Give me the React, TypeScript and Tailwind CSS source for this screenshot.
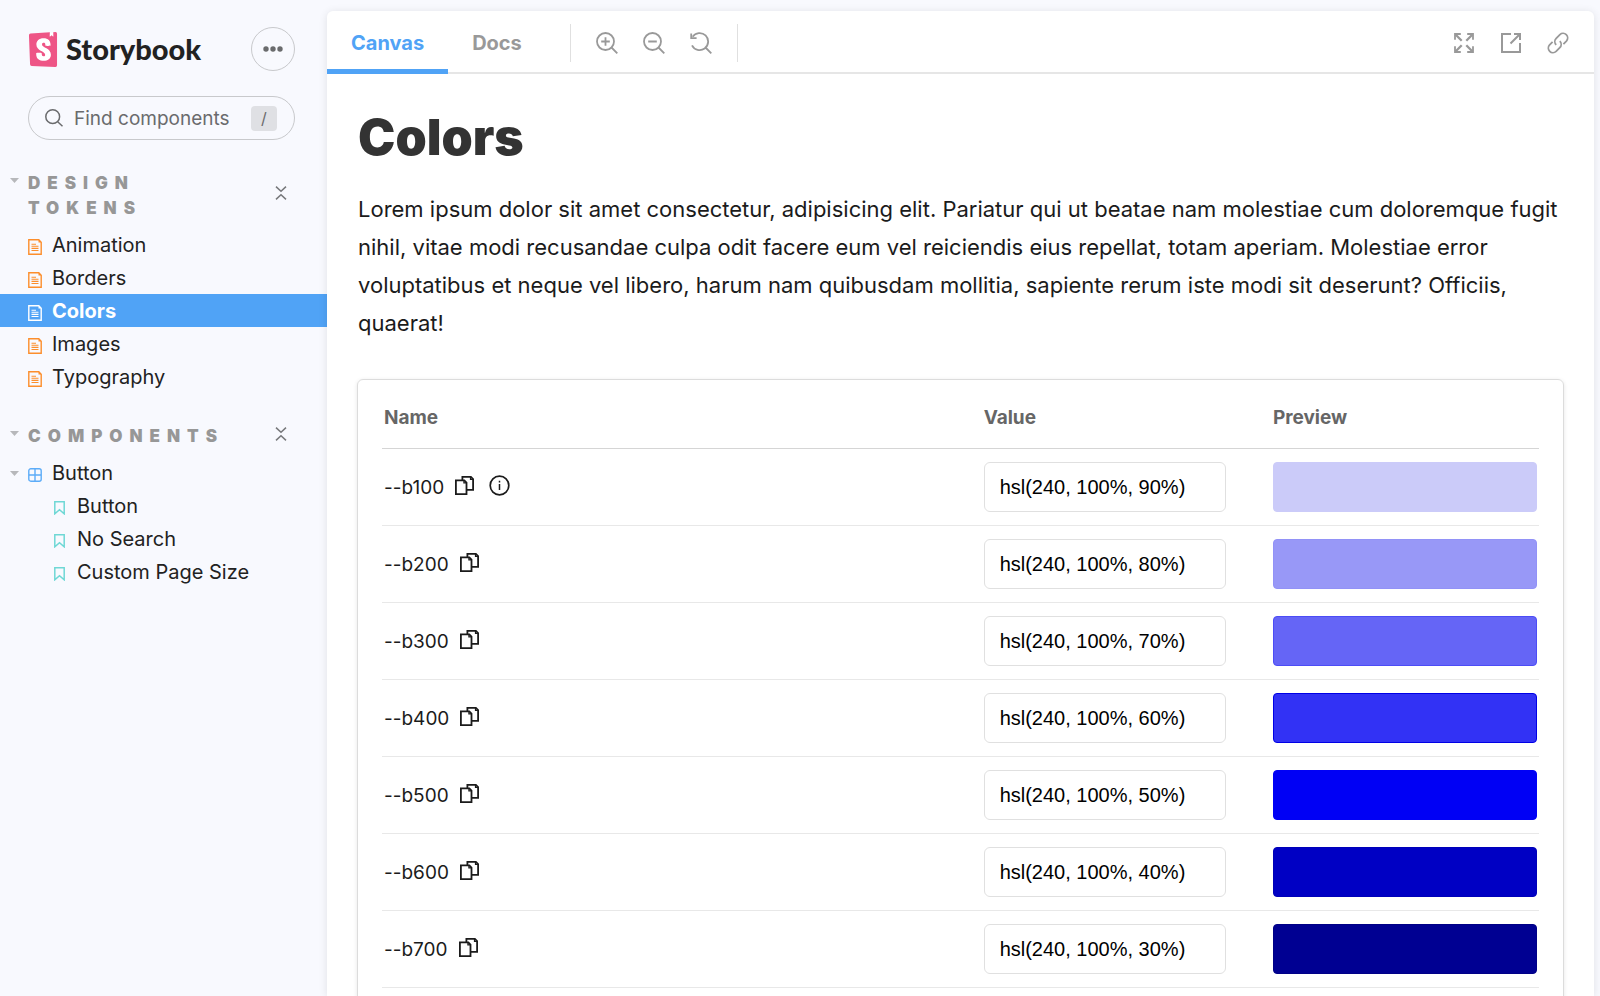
import type { ReactNode } from "react";
import { SiStorybook } from "react-icons/si";

const tokens = [
  { name: "--b100", value: "hsl(240, 100%, 90%)", swatch: "border-[#cbcbf9] bg-[#cbcbf9]", info: true },
  { name: "--b200", value: "hsl(240, 100%, 80%)", swatch: "border-[#9292f7] bg-[#9898f7]" },
  { name: "--b300", value: "hsl(240, 100%, 70%)", swatch: "border-[#4c4cf6] bg-[#6565f6]" },
  { name: "--b400", value: "hsl(240, 100%, 60%)", swatch: "border-[#0000e6] bg-[#3232f5]" },
  { name: "--b500", value: "hsl(240, 100%, 50%)", swatch: "border-[#0000f5] bg-[#0000f5]" },
  { name: "--b600", value: "hsl(240, 100%, 40%)", swatch: "border-[#0000b8] bg-[#0000c4]" },
  { name: "--b700", value: "hsl(240, 100%, 30%)", swatch: "border-[#000086] bg-[#000092]" },
];

const documents = ["Animation", "Borders", "Colors", "Images", "Typography"];
const stories = ["Button", "No Search", "Custom Page Size"];

function Caret() {
  return (
    <svg className="h-[5px] w-[9px] shrink-0" viewBox="0 0 9 5" aria-hidden="true">
      <path d="M0 0h9L4.5 5z" fill="#b7b8bb" />
    </svg>
  );
}

function DocumentIcon({ active }: { active: boolean }) {
  return (
    <svg
      className={active ? "h-4 w-3.5 text-white" : "h-4 w-3.5 text-[#fc8e2c]"}
      viewBox="0 0 14 16"
      fill="none"
      stroke="currentColor"
      strokeWidth="1.4"
      aria-hidden="true"
    >
      <path d="M.8.8h10l2.4 2.4v12H.8z" />
      <path d="M3.5 5.2h4.500M3.5 7.3h7M3.5 9.400h7M3.5 11.5h7" strokeWidth="1.1" />
      <path d="M10.500.8v2.800h2.700z" fill="currentColor" stroke="none" />
    </svg>
  );
}

function ComponentIcon() {
  return (
    <svg className="h-3.5 w-3.5" viewBox="0 0 14 14" fill="none" stroke="#5cacf8" strokeWidth="1.4" aria-hidden="true">
      <rect x=".8" y=".8" width="12.4" height="12.4" rx="2" />
      <path d="M7 1v12M1 7h12" />
    </svg>
  );
}

function BookmarkIcon() {
  return (
    <svg className="h-3.5 w-[11px]" viewBox="0 0 11 14" fill="none" stroke="#6fd8d5" strokeWidth="1.5" aria-hidden="true">
      <path d="M.8.8h9.4v12L5.5 8.7.8 12.8z" />
    </svg>
  );
}

function CollapseIcon() {
  return (
    <svg className="h-3.5 w-3" viewBox="0 0 12 14" fill="none" stroke="#77787b" strokeWidth="1.5" aria-hidden="true">
      <path d="M1 .6l5 4.700 5-4.700M1 13.400l5-4.700 5 4.700" />
    </svg>
  );
}

function ToolButton({ label, children }: { label: string; children: ReactNode }) {
  return (
    <button type="button" aria-label={label} className="text-[#999999]">
      <svg className="h-[22px] w-[22px]" viewBox="0 0 22 22" fill="none" stroke="currentColor" strokeWidth="1.8" aria-hidden="true">
        {children}
      </svg>
    </button>
  );
}

function CopyIcon() {
  return (
    <svg className="h-[19px] w-[19px]" viewBox="0 0 19 19" fill="none" stroke="#1b1b1b" strokeWidth="1.8" aria-hidden="true">
      <path d="M.9 4.300h8.400l2.200 2.200v11.600H.9z" />
      <path d="M8.900 4.500v2.400h2.500" strokeWidth="1.200" />
      <path d="M7.400 4.300V.9h8.500l2.200 2.200v10.700h-6.400" />
      <path d="M15.500 1.100v2.400H18" strokeWidth="1.200" />
    </svg>
  );
}

function SectionHeading({ title, lines }: { title: string; lines: string[] }) {
  return (
    <div className="flex items-start pl-2.5 pr-10">
      <div className="flex h-[19px] w-[18px] items-center">
        <Caret />
      </div>
      <button
        type="button"
        className="text-left text-[17px] leading-[25px] font-black tracking-[7px] text-[#979797] uppercase"
      >
        {lines.map((line) => (
          <span key={line} className="block">
            {line}
          </span>
        ))}
      </button>
      <button type="button" aria-label={`Collapse ${title}`} className="ml-auto self-center pb-1.5">
        <CollapseIcon />
      </button>
    </div>
  );
}

function Sidebar() {
  return (
    <aside className="w-[327px] shrink-0">
      <div className="flex items-center justify-between pt-[27px] pr-8 pl-7">
        <a href="#home" className="flex items-center gap-2">
          <svg className="h-[35px] w-[30px]" viewBox="2 0 20 24" aria-hidden="true">
            <path d="M6 4h12v16H6z" fill="#fff" />
            <path d="M16.500.5h2.500v4h-2.500z" fill="#fff" />
            <SiStorybook size={24} color="#ee5586" />
          </svg>
          <span className="font-['Lato',sans-serif] text-[29px] leading-9 font-black text-[#222222]">Storybook</span>
        </a>
        <button
          type="button"
          aria-label="Shortcuts"
          className="flex h-11 w-11 items-center justify-center rounded-full border border-[#c8c9cc]"
        >
          <svg className="h-1.5 w-5" viewBox="0 0 20 6" fill="#6a6b6d" aria-hidden="true">
            <circle cx="3" cy="3" r="2.7" />
            <circle cx="10" cy="3" r="2.7" />
            <circle cx="17" cy="3" r="2.7" />
          </svg>
        </button>
      </div>

      <label className="mt-[25px] mr-8 ml-7 flex h-11 items-center rounded-full border border-[#c8c9cc] pr-[17px] pl-4">
        <svg className="h-[18px] w-[18px] shrink-0" viewBox="0 0 18 18" fill="none" stroke="#6a6b6d" strokeWidth="1.5" aria-hidden="true">
          <circle cx="7.7" cy="7.7" r="6.9" />
          <path d="M12.7 12.7l4.8 4.600" />
        </svg>
        <input
          type="text"
          aria-label="Find components"
          placeholder="Find components"
          className="ml-[11px] min-w-0 flex-1 bg-transparent pt-0.5 text-[19px] leading-6 text-[#6a6b6d] outline-none placeholder:text-[#6a6b6d]"
        />
        <kbd className="flex h-[25px] w-[26px] items-center justify-center rounded bg-[#dfe0e4] font-['Inter',sans-serif] text-base text-[#6a6b6d]">
          /
        </kbd>
      </label>

      <nav className="pt-[31px] text-[20px] leading-[33px] text-[#222222]">
        <SectionHeading title="Design Tokens" lines={["Design", "Tokens"]} />
        <ul className="mt-[7px]">
          {documents.map((name) => {
            const active = name === "Colors";
            return (
              <li key={name}>
                <a
                  href={`#${name.toLowerCase()}`}
                  className={
                    active
                      ? "flex h-[33px] items-center gap-2.5 bg-[#50a3f6] pt-0.5 pl-7 font-bold text-white"
                      : "flex h-[33px] items-center gap-2.5 pt-0.5 pl-7"
                  }
                >
                  <span className="pt-0.5">
                    <DocumentIcon active={active} />
                  </span>
                  {name}
                </a>
              </li>
            );
          })}
        </ul>
        <div className="mt-[31px]">
          <SectionHeading title="Components" lines={["Components"]} />
        </div>
        <div className="mt-[7px]">
          <a href="#button" className="flex h-[33px] items-center pt-0.5 pl-2.5">
            <span className="w-[18px]">
              <Caret />
            </span>
            <span className="mr-2.5 pt-0.5">
              <ComponentIcon />
            </span>
            Button
          </a>
          <ul>
            {stories.map((name) => (
              <li key={name}>
                <a
                  href={`#${name.toLowerCase().replace(/ /g, "-")}`}
                  className="flex h-[33px] items-center gap-3 pt-0.5 pl-[54px]"
                >
                  <span className="pt-0.5">
                    <BookmarkIcon />
                  </span>
                  {name}
                </a>
              </li>
            ))}
          </ul>
        </div>
      </nav>
    </aside>
  );
}

function Toolbar() {
  return (
    <header className="flex h-[63px] shrink-0 border-b-2 border-[#e6e6e6] text-[20px] font-bold">
      <button type="button" className="-mb-0.5 border-b-[5px] border-[#50a3f6] px-6 pt-1.5 text-[#50a3f6]">
        Canvas
      </button>
      <button type="button" className="px-6 pt-[3px] text-[#999999]">
        Docs
      </button>
      <div className="ml-6 flex items-center pt-0.5">
        <div className="h-[38px] w-px bg-[#e0e0e0]" />
        <div className="flex gap-[25px] px-[25px]">
          <ToolButton label="Zoom in">
            <circle cx="9.5" cy="9.5" r="8.5" />
            <path d="M15.5 15.5l5.800 5.800M9.5 5.2v8.600M5.2 9.5h8.600" />
          </ToolButton>
          <ToolButton label="Zoom out">
            <circle cx="9.5" cy="9.5" r="8.5" />
            <path d="M15.5 15.5l5.800 5.800M5.2 9.5h8.600" />
          </ToolButton>
          <ToolButton label="Reset zoom">
            <path d="M2.600 4.800A8.5 8.5 0 1 1 2 13.300M15.5 15.5l5.800 5.800" />
            <path d="M1.200 1.500v4.600h5.400" />
          </ToolButton>
        </div>
        <div className="h-[38px] w-px bg-[#e0e0e0]" />
      </div>
      <div className="ml-auto flex items-center gap-[25px] pt-0.5 pr-[25px]">
        <ToolButton label="Go full screen">
          <path d="M2 7.800V2h5.800M14.200 2H20v5.800M20 14.200V20h-5.800M7.800 20H2v-5.800" />
          <path d="M2.500 2.500l6.200 6.200M19.500 2.500l-6.200 6.200M19.500 19.500l-6.200-6.200M2.500 19.500l6.200-6.200" strokeWidth="2.300" />
        </ToolButton>
        <ToolButton label="Open canvas in new tab">
          <path d="M11 2H2v18h18v-9M14 2h6v6M20 2l-9.500 9.500" strokeWidth="2" />
        </ToolButton>
        <ToolButton label="Copy canvas link">
          <path d="M9.200 12.800a4.600 4.600 0 0 1 0-6.500l3.700-3.700a4.600 4.600 0 0 1 6.500 6.500l-3 3" />
          <path d="M12.800 9.200a4.600 4.600 0 0 1 0 6.500l-3.700 3.700a4.600 4.600 0 0 1-6.500-6.500l3-3" />
        </ToolButton>
      </div>
    </header>
  );
}

function TokenTable() {
  return (
    <div className="-mx-px mt-9 rounded-md border border-[#dcdcdc] px-6 pt-2 pb-6 shadow-[0_1px_4px_rgba(0,0,0,0.1)]">
      <table className="w-full table-fixed border-collapse">
        <thead>
          <tr className="h-[60px] border-b border-[#d5d5d5] text-left text-[19px] text-[#666666]">
            <th className="w-[52%] pl-0.5 font-bold">Name</th>
            <th className="w-[25%] font-bold">Value</th>
            <th className="w-[23%] font-bold">Preview</th>
          </tr>
        </thead>
        <tbody>
          {tokens.map((token) => (
            <tr key={token.name} className="h-[77px] border-b border-[#e8e8e8]">
              <td className="pl-0.5">
                <div className="flex items-center text-[19px] text-[#1b1b1b]">
                  <span className="pt-[3px]">{token.name}</span>
                  <button type="button" aria-label={`Copy ${token.name}`} className="ml-[11px] pb-0.5">
                    <CopyIcon />
                  </button>
                  {token.info && (
                    <button type="button" aria-label={`About ${token.name}`} className="ml-[15px] pb-0.5">
                      <svg className="h-[21px] w-[21px]" viewBox="0 0 21 21" fill="none" stroke="#1b1b1b" strokeWidth="1.7" aria-hidden="true">
                        <circle cx="10.5" cy="10.5" r="9.3" />
                        <path d="M10.5 9v6M10.5 5.8v1.7" strokeWidth="1.5" />
                      </svg>
                    </button>
                  )}
                </div>
              </td>
              <td>
                <input
                  type="text"
                  aria-label={`Value of ${token.name}`}
                  defaultValue={token.value}
                  className="block h-[50px] w-[242px] rounded-md border border-[#e0e0e0] bg-white px-[15px] pt-0.5 font-['Liberation_Sans',sans-serif] text-[20px] text-black"
                />
              </td>
              <td className="pr-0.5">
                <div className={`${token.swatch} h-[50px] rounded border`} />
              </td>
            </tr>
          ))}
        </tbody>
      </table>
    </div>
  );
}

export default function App() {
  return (
    <div className="flex h-screen overflow-hidden bg-[#f8f9fe] font-['Inter',sans-serif]">
      <Sidebar />
      <div className="flex min-w-0 flex-1 pt-[11px] pr-1.5">
        <div className="flex min-w-0 flex-1 flex-col rounded-t-md bg-white shadow-[0_1px_8px_rgba(0,0,0,0.1)]">
          <Toolbar />
          <main className="min-h-0 flex-1 overflow-y-auto px-[31px] pt-[33px] [scrollbar-width:none]">
            <h1 className="text-[50px] leading-[60px] font-black text-[#333333]">Colors</h1>
            <p className="mt-[23px] pb-px text-[22px] leading-[38px] text-[#1b1b1b]">
              Lorem ipsum dolor sit amet consectetur, adipisicing elit. Pariatur qui ut beatae nam molestiae cum
              doloremque fugit nihil, vitae modi recusandae culpa odit facere eum vel reiciendis eius repellat, totam
              aperiam. Molestiae error voluptatibus et neque vel libero, harum nam quibusdam mollitia, sapiente rerum
              iste modi sit deserunt? Officiis, quaerat!
            </p>
            <TokenTable />
          </main>
        </div>
      </div>
    </div>
  );
}
